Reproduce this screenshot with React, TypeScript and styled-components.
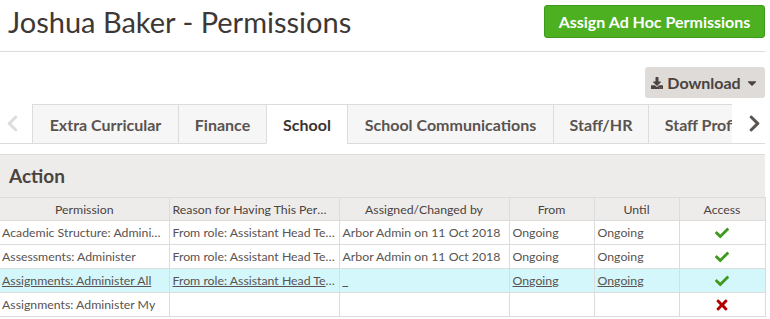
import React from "react";
import styled, { createGlobalStyle } from "styled-components";
import {
  FaDownload,
  FaCaretDown,
  FaChevronLeft,
  FaChevronRight,
  FaCheck,
  FaTimes,
} from "react-icons/fa";

const GlobalStyle = createGlobalStyle`
  body {
    margin: 0;
    background: #fff;
    font-family: Lato, "Open Sans", sans-serif;
    color: #4f4845;
  }
`;

const Page = styled.div`
  width: 765px;
`;

const Header = styled.div`
  display: flex;
  justify-content: space-between;
  align-items: flex-start;
  height: 51px;
  border-bottom: 1px solid #dcdcdc;
`;

const Title = styled.h1`
  margin: 0 0 0 8px;
  font-size: 29px;
  line-height: 44px;
  font-weight: 400;
  color: #3d3835;
`;

const GreenButton = styled.button`
  margin-top: 5px;
  height: 33px;
  width: 221px;
  border: 1px solid #3c9a1b;
  border-radius: 3px;
  background: #4cb021;
  color: #fff;
  font-family: inherit;
  font-size: 16px;
  font-weight: 700;
  padding: 0;
`;

const Toolbar = styled.div`
  display: flex;
  justify-content: flex-end;
  padding-top: 15px;
`;

const GreyButton = styled.button`
  display: flex;
  align-items: center;
  justify-content: center;
  gap: 4px;
  height: 31px;
  width: 120px;
  border: none;
  border-radius: 3px;
  background: #dedbd9;
  color: #4a4340;
  font-family: inherit;
  font-size: 16px;
  font-weight: 700;
  padding: 0;
`;

const TabBar = styled.div`
  display: flex;
  align-items: stretch;
  margin-top: 6px;
  height: 40px;
  border-bottom: 1px solid #dcdcdc;
  box-sizing: border-box;
`;

const Arrow = styled.div<{ $dim?: boolean; $pad: number }>`
  width: 32px;
  box-sizing: border-box;
  padding-left: ${({ $pad }) => $pad}px;
  display: flex;
  align-items: center;
  font-size: 19px;
  color: ${({ $dim }) => ($dim ? "#dddddd" : "#5a5350")};
`;

const TabStrip = styled.div`
  display: flex;
  width: 700px;
  overflow: hidden;
  margin-bottom: -1px;
`;

const Tab = styled.div<{ $w: number; $active?: boolean }>`
  flex: 0 0 ${({ $w }) => $w}px;
  box-sizing: border-box;
  display: flex;
  align-items: center;
  justify-content: center;
  white-space: nowrap;
  border: 1px solid #dcdcdc;
  border-right: none;
  border-bottom-color: ${({ $active }) => ($active ? "#fff" : "#dcdcdc")};
  background: ${({ $active }) => ($active ? "#fff" : "#f6f6f6")};
  color: ${({ $active }) => ($active ? "#3a3330" : "#5a5350")};
  font-size: 16px;
  font-weight: 700;
`;

const Panel = styled.div`
  margin-top: 10px;
  background: #eeeceb;
  border-top: 1px solid #dcdcdc;
`;

const PanelTitle = styled.h2`
  margin: 0;
  height: 42px;
  line-height: 42px;
  padding-left: 9px;
  font-size: 19px;
  font-weight: 700;
  color: #4a4340;
`;

const Table = styled.table`
  width: 765px;
  table-layout: fixed;
  border-collapse: collapse;
  font-size: 12.3px;
`;

const Th = styled.th`
  height: 22px;
  padding: 0 3px;
  border: 1px solid #dcdcdc;
  font-weight: 400;
  text-align: center;
  color: #4a4340;
  white-space: nowrap;
  overflow: hidden;
  text-overflow: ellipsis;
  &:first-child { border-left: none; }
`;

const Tr = styled.tr<{ $hl?: boolean }>`
  background: ${({ $hl }) => ($hl ? "#d4f7fb" : "#fff")};
`;

const Td = styled.td<{ $link?: boolean; $center?: boolean }>`
  height: 23px;
  padding: 0 3px;
  border: 1px solid #dcdcdc;
  color: #5a5350;
  white-space: nowrap;
  overflow: hidden;
  text-overflow: ellipsis;
  text-decoration: ${({ $link }) => ($link ? "underline" : "none")};
  text-align: ${({ $center }) => ($center ? "center" : "left")};
  &:first-child { border-left: none; padding-left: 2px; }
`;

const Yes = styled(FaCheck)`
  color: #3f9a1c;
  font-size: 14px;
  vertical-align: middle;
`;

const No = styled(FaTimes)`
  color: #b20000;
  font-size: 16px;
  vertical-align: middle;
`;

type Row = {
  permission: string;
  reason: string;
  by: string;
  from: string;
  until: string;
  access: boolean;
  highlight?: boolean;
};

const tabs = [
  { label: "Extra Curricular", w: 146 },
  { label: "Finance", w: 88 },
  { label: "School", w: 81, active: true },
  { label: "School Communications", w: 206 },
  { label: "Staff/HR", w: 95 },
  { label: "Staff Profile", w: 116 },
];

const rows: Row[] = [
  {
    permission: "Academic Structure: Administer",
    reason: "From role: Assistant Head Teacher",
    by: "Arbor Admin on 11 Oct 2018",
    from: "Ongoing",
    until: "Ongoing",
    access: true,
  },
  {
    permission: "Assessments: Administer",
    reason: "From role: Assistant Head Teacher",
    by: "Arbor Admin on 11 Oct 2018",
    from: "Ongoing",
    until: "Ongoing",
    access: true,
  },
  {
    permission: "Assignments: Administer All",
    reason: "From role: Assistant Head Teacher",
    by: "_",
    from: "Ongoing",
    until: "Ongoing",
    access: true,
    highlight: true,
  },
  {
    permission: "Assignments: Administer My",
    reason: "",
    by: "",
    from: "",
    until: "",
    access: false,
  },
];

const widths = [169, 170, 170, 85, 85, 86];

export default function App() {
  return (
    <Page>
      <GlobalStyle />
      <Header>
        <Title>Joshua Baker - Permissions</Title>
        <GreenButton>Assign Ad Hoc Permissions</GreenButton>
      </Header>
      <Toolbar>
        <GreyButton>
          <FaDownload size={12} />
          Download
          <FaCaretDown size={14} />
        </GreyButton>
      </Toolbar>
      <TabBar>
        <Arrow $dim $pad={3}>
          <FaChevronLeft />
        </Arrow>
        <TabStrip>
          {tabs.map((t) => (
            <Tab key={t.label} $w={t.w} $active={t.active}>
              {t.label}
            </Tab>
          ))}
        </TabStrip>
        <Arrow $pad={13}>
          <FaChevronRight />
        </Arrow>
      </TabBar>
      <Panel>
        <PanelTitle>Action</PanelTitle>
        <Table>
          <colgroup>
            {widths.map((w, i) => (
              <col key={i} style={{ width: w }} />
            ))}
          </colgroup>
          <thead>
            <tr>
              <Th>Permission</Th>
              <Th>Reason for Having This Permission</Th>
              <Th>Assigned/Changed by</Th>
              <Th>From</Th>
              <Th>Until</Th>
              <Th>Access</Th>
            </tr>
          </thead>
          <tbody>
            {rows.map((r, i) => (
              <Tr key={i} $hl={r.highlight}>
                <Td $link={r.highlight}>{r.permission}</Td>
                <Td $link={r.highlight}>{r.reason}</Td>
                <Td $link={r.highlight}>{r.by}</Td>
                <Td $link={r.highlight}>{r.from}</Td>
                <Td $link={r.highlight}>{r.until}</Td>
                <Td $center>{r.access ? <Yes /> : <No />}</Td>
              </Tr>
            ))}
          </tbody>
        </Table>
      </Panel>
    </Page>
  );
}
